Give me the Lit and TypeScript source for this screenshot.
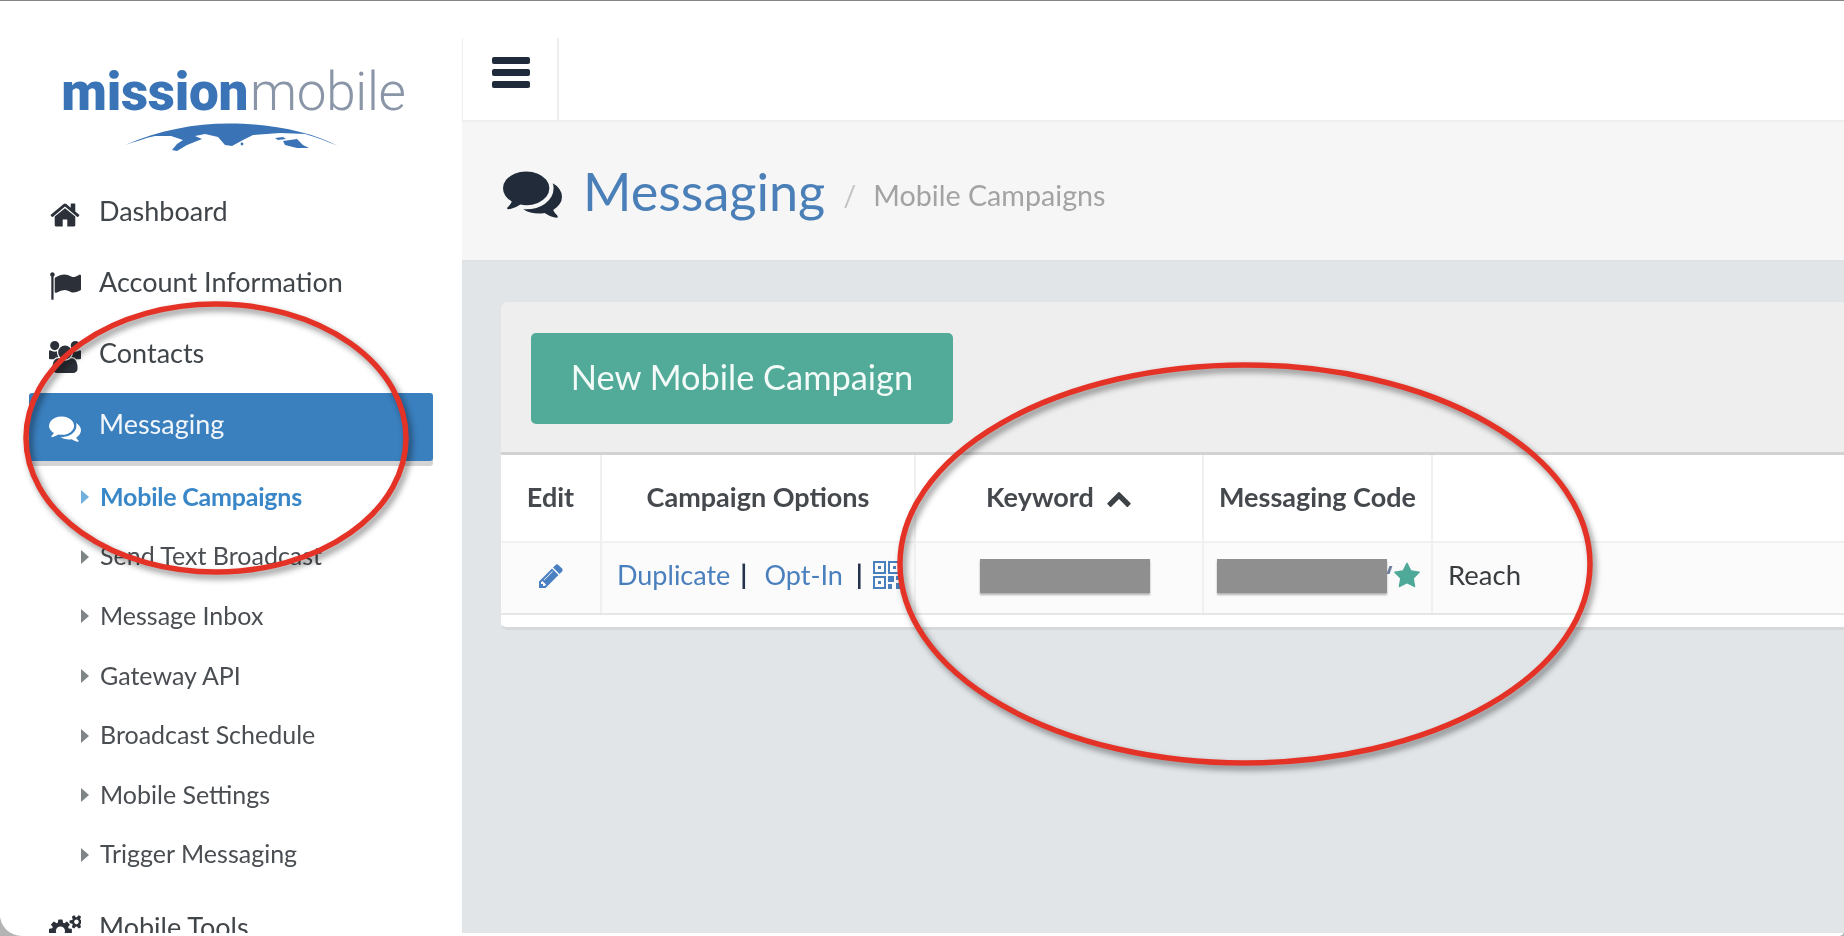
import { LitElement, html, css, svg } from "lit";
import { customElement } from "lit/decorators.js";

const COMMENTS = "M1408 768q0 139-94 257t-256.5 186.5-353.5 68.5q-86 0-176-16-124 88-278 128-36 9-86 16h-3q-11 0-20.5-8t-11.5-21q-1-3-1-6.5t.5-6.5 2-6l2.5-5 3.5-5.5 4-5 4.5-5 4-4.5q5-6 23-25t26-29.5 22.5-29 25-38.5 20.5-44q-124-72-195-177t-71-224q0-139 94-257t256.5-186.5 353.5-68.5 353.5 68.5 256.5 186.5 94 257zm384 256q0 120-71 224.5t-195 176.5q10 24 20.5 44t25 38.5 22.5 29 26 29.5 23 25q1 1 4 4.5t4.5 5 4 5 3.5 5.5l2.5 5 2 6 .5 6.5-1 6.5q-3 14-13 22t-22 7q-50-7-86-16-154-40-278-128-90 16-176 16-271 0-472-132 58 4 88 4 161 0 309-45t264-129q125-92 192-212t67-254q0-77-23-152 129 71 204 178t75 230z";
const HOME = "M1472 992v480q0 26-19 45t-45 19h-384v-384h-256v384h-384q-26 0-45-19t-19-45v-480q0-1 .5-3t.5-3l575-474 575 474q1 2 1 6zm223-69l-62 74q-8 9-21 11h-3q-13 0-21-7l-692-577-692 577q-12 8-24 7-13-2-21-11l-62-74q-8-10-7-23.5t11-21.5l719-599q32-26 76-26t76 26l244 204v-195q0-14 9-23t23-9h192q14 0 23 9t9 23v408l219 182q10 8 11 21.5t-7 23.5z";
const FLAG = "M320 256q0 72-64 110v1266q0 13-9.5 22.5t-22.5 9.5h-64q-13 0-22.5-9.5t-9.5-22.5v-1266q-64-38-64-110 0-53 37.5-90.5t90.5-37.5 90.5 37.5 37.5 90.5zm1472 64v763q0 25-12.5 38.5t-39.5 27.5q-215 116-369 116-61 0-123.5-22t-108.5-48-115.5-48-142.5-22q-192 0-464 146-17 9-33 9-26 0-45-19t-19-45v-742q0-32 31-55 21-14 79-43 236-120 421-120 107 0 200 29t219 88q38 19 88 19 54 0 117.5-21t110-47 88-47 54.5-21q26 0 45 19t19 45z";
const GROUP = "M529 896q-162 5-265 128h-134q-82 0-138-40.5t-56-118.5q0-353 124-353 6 0 43.5 21t97.5 42.5 119 21.5q67 0 133-23-5 37-5 66 0 139 81 256zm1071 637q0 120-73 189.5t-194 69.5h-874q-121 0-194-69.5t-73-189.5q0-53 3.5-103.5t14-109 26.5-108.5 43-97.5 62-81 85.5-53.5 111.5-20q10 0 43 21.5t73 48 107 48 135 21.5 135-21.5 107-48 73-48 43-21.5q61 0 111.5 20t85.5 53.5 62 81 43 97.5 26.5 108.5 14 109 3.5 103.5zm-1024-1277q0 106-75 181t-181 75-181-75-75-181 75-181 181-75 181 75 75 181zm704 384q0 159-112.5 271.5t-271.5 112.5-271.5-112.5-112.5-271.5 112.5-271.5 271.5-112.5 271.5 112.5 112.5 271.5zm576 225q0 78-56 118.5t-138 40.5h-134q-103-123-265-128 81-117 81-256 0-29-5-66 66 23 133 23 59 0 119-21.5t97.5-42.5 43.5-21q124 0 124 353zm-128-609q0 106-75 181t-181 75-181-75-75-181 75-181 181-75 181 75 75 181z";
const COGS = "M896 896q0-106-75-181t-181-75-181 75-75 181 75 181 181 75 181-75 75-181zm768 512q0-52-38-90t-90-38-90 38-38 90q0 53 37.5 90.5t90.5 37.5 90.5-37.5 37.5-90.5zm0-1024q0-52-38-90t-90-38-90 38-38 90q0 53 37.5 90.5t90.5 37.5 90.5-37.5 37.5-90.5zm-384 421v185q0 10-7 19.5t-16 10.5l-155 24q-11 35-32 76 34 48 90 115 7 11 7 20 0 12-7 19-23 30-82.5 89.5t-78.5 59.5q-11 0-21-7l-115-90q-37 19-77 31-11 108-23 155-7 24-30 24h-186q-11 0-20-7.5t-10-17.5l-23-153q-34-10-75-31l-118 89q-7 7-20 7-11 0-21-8-144-133-144-160 0-9 7-19 10-14 41-53t47-61q-23-44-35-82l-152-24q-10-1-17-9.5t-7-19.5v-185q0-10 7-19.5t16-10.5l155-24q11-35 32-76-34-48-90-115-7-11-7-20 0-12 7-20 22-30 82-89t79-59q11 0 21 7l115 90q34-18 77-32 11-108 23-154 7-24 30-24h186q11 0 20 7.5t10 17.5l23 153q34 10 75 31l118-89q8-7 20-7 11 0 21 8 144 133 144 160 0 8-7 19-12 16-42 54t-45 60q23 48 34 82l152 23q10 2 17 10.5t7 19.5zm640 533v140q0 16-149 31-12 27-30 52 51 113 51 138 0 4-4 7-122 71-124 71-8 0-46-47t-52-68q-20 2-30 2t-30-2q-14 21-52 68t-46 47q-2 0-124-71-4-3-4-7 0-25 51-138-18-25-30-52-149-15-149-31v-140q0-16 149-31 13-29 30-52-51-113-51-138 0-4 4-7 4-2 35-20t59-34 30-16q8 0 46 46.5t52 67.5q20-2 30-2t30 2q51-71 92-112l6-2q4 0 124 70 4 3 4 7 0 25-51 138 17 23 30 52 149 15 149 31zm0-1024v140q0 16-149 31-12 27-30 52 51 113 51 138 0 4-4 7-122 71-124 71-8 0-46-47t-52-68q-20 2-30 2t-30-2q-14 21-52 68t-46 47q-2 0-124-71-4-3-4-7 0-25 51-138-18-25-30-52-149-15-149-31v-140q0-16 149-31 13-29 30-52-51-113-51-138 0-4 4-7 4-2 35-20t59-34 30-16q8 0 46 46.5t52 67.5q20-2 30-2t30 2q51-71 92-112l6-2q4 0 124 70 4 3 4 7 0 25-51 138 17 23 30 52 149 15 149 31z";
const PENCIL = "M491 1536l91-91-235-235-91 91v107h128v128h107zm523-928q0-22-22-22-10 0-17 7l-542 542q-7 7-7 17 0 22 22 22 10 0 17-7l542-542q7-7 7-17zm-54-192l416 416-832 832h-416v-416zm683 96q0 53-37 90l-166 166-416-416 166-165q36-38 90-38 53 0 91 38l235 234q37 39 37 91z";
const STAR = "M1728 647q0 22-26 48l-363 354 86 500q1 7 1 20 0 21-10.5 35.5t-30.5 14.5q-19 0-40-12l-449-236-449 236q-22 12-40 12-21 0-31.5-14.5t-10.5-35.5q0-6 2-20l86-500-364-354q-25-27-25-48 0-37 56-46l502-73 225-455q19-41 49-41t49 41l225 455 502 73q56 9 56 46z";
const CHEVRON = "M1683 1331l-166 165q-19 19-45 19t-45-19l-531-531-531 531q-19 19-45 19t-45-19l-166-165q-19-19-19-45.5t19-45.5l742-741q19-19 45-19t45 19l742 741q19 19 19 45.5t-19 45.5z";

const fa = (d: string, cls: string) => html`<svg class=${cls} viewBox="0 0 1792 1792" aria-hidden="true"><path fill="currentColor" d=${d}></path></svg>`;

const SUBS = ["Mobile Campaigns", "Send Text Broadcast", "Message Inbox", "Gateway API", "Broadcast Schedule", "Mobile Settings", "Trigger Messaging"];

@customElement("app-root")
export class AppRoot extends LitElement {
  static styles = css`
    :host { display: block; position: relative; width: 1844px; height: 936px; overflow: hidden; background: #b4b4b4; font-family: "Lato", "Liberation Sans", sans-serif; color: #40454a; }
    * { box-sizing: border-box; }
    .window { height: 936px; border-top: 1px solid #858585; background: #fff; border-radius: 0 0 5px 22px; overflow: hidden; padding-bottom: 3px; filter: blur(0.6px); }
    .shell { display: flex; height: 100%; }

    .sidebar { width: 462px; flex: none; background: #fff; overflow: hidden; padding: 0 29px; }
    .logo { height: 176px; margin-left: 33px; width: 343px; display: flex; flex-direction: column; align-items: center; padding-top: 63px; }
    .word { white-space: nowrap; line-height: 56px; height: 56px; font-family: "Roboto", sans-serif; font-size: 53px; color: #3a74b6; }
    .word b { font-weight: 900; letter-spacing: -0.3px; }
    .word span { font-weight: 300; color: #8a95a8; letter-spacing: -0.3px; margin-left: 2px; }
    .globe { width: 213px; height: 28px; margin: 3px 0 0 -4px; color: #3a74b6; flex: none; }

    .item { display: flex; align-items: center; height: 71px; padding: 0 0 5px 20px; font-size: 27px; color: #40454a; }
    .item .ic { width: 32px; height: 32px; margin: 10px 18px 0 0; flex: none; color: #2c3038; }
    .item.active { margin-top: 3px; height: 68px; padding-bottom: 8px; background: #3a7fbe; color: #f1f6fb; border-radius: 3px; box-shadow: 0 5px 0 #d4d4d4; }
    .item.active .ic { color: #fff; }
    .subs { padding-top: 5px; padding-bottom: 10px; }
    .sub { display: flex; align-items: center; height: 59.6px; padding-left: 52px; font-size: 25px; color: #4a4e52; }
    .sub i { width: 0; height: 0; border-left: 8px solid #7f8486; border-top: 7px solid transparent; border-bottom: 7px solid transparent; margin: 3px 11px 0 0; flex: none; }
    .sub.on { color: #3a87c8; font-weight: 700; letter-spacing: -0.22px; }
    .sub.on i { border-left-color: #6fb0dc; }

    .main { flex: 1; min-width: 0; display: flex; flex-direction: column; background: #e1e5e8; }
    .topbar { height: 121px; flex: none; background: #fff; border-bottom: 2px solid #efefef; padding-top: 37px; }
    .toggle { width: 97px; height: 83px; border-left: 1px solid #eee; border-right: 2px solid #eee; padding: 19px 0 0 29px; display: flex; flex-direction: column; gap: 5px; }
    .toggle i { display: block; width: 38px; height: 7px; border-radius: 2px; background: #1f2a3a; }

    .pagehead { height: 140px; flex: none; background: #f6f6f6; border-bottom: 2px solid #dfe2e4; display: flex; align-items: center; padding: 0 0 0 41px; }
    .pagehead .big { width: 59px; height: 59px; color: #212b3a; margin-right: 21px; margin-top: 2px; flex: none; }
    .pagehead h1 { margin: 0; font-size: 52.2px; font-weight: 400; color: #4a7fb8; line-height: 1; }
    .pagehead .sep { margin: 8px 0 0 18px; font-size: 28.7px; color: #c4c4c4; }
    .pagehead .crumb { margin: 8px 0 0 17px; font-size: 28.7px; color: #a3a3a3; }

    .content { flex: 1; padding: 40px 0 0 39px; }
    .card { background: #fff; border-radius: 8px 0 0 6px; border-bottom: 3px solid #d8d8d8; padding-bottom: 12px; overflow: hidden; }
    .tools { background: #eee; height: 153px; padding: 31px 0 0 30px; border-bottom: 3px solid #d2d2d2; }
    .btn { display: flex; align-items: center; justify-content: center; width: 422px; height: 91px; padding-bottom: 5px; background: #52aa98; border-radius: 5px; color: #f2fbf8; font-size: 34.4px; }
    table { width: 100%; border-collapse: collapse; table-layout: fixed; }
    col.c1 { width: 100px; } col.c2 { width: 314px; } col.c3 { width: 288px; } col.c4 { width: 229px; }
    th { height: 87px; font-size: 27px; font-weight: 700; color: #45494e; text-align: center; border-right: 2px solid #f0f0f0; padding: 0 0 4px; }
    th:last-child, td:last-child { border-right: 0; }
    th .chev { width: 26px; height: 26px; margin-left: 12px; vertical-align: -4px; color: #3d4247; }
    td { height: 72px; font-size: 27.5px; color: #3a3d40; background: #fbfbfb; border-top: 2px solid #f1f1f1; border-bottom: 2px solid #e6e6e6; border-right: 2px solid #f0f0f0; padding: 0 0 4px; }
    td.center { text-align: center; padding-bottom: 10px; }
    td.reach { padding: 0 0 7px 15px; }
    .pen { width: 28px; height: 28px; color: #4a7fc1; vertical-align: middle; }
    .opts { display: flex; align-items: center; padding-left: 15px; margin-top: -3px; font-size: 27px; white-space: nowrap; overflow: hidden; color: #4a7fbe; }
    .opts .bar { color: #26324d; font-weight: 700; margin: 0 17px 0 10px; }
    .opts .bar.b2 { margin: 0 10px 0 13px; }
    .qr { width: 28px; height: 28px; flex: none; color: #4a7fbe; }
    .redact { display: block; width: 170px; height: 34px; flex: none; background: #8f8f8f; box-shadow: 0 2px 2px rgba(0,0,0,.3); }
    .cell-k { padding-left: 64px; }
    .cell-m { display: flex; align-items: center; padding-left: 13px; }
    .tick { width: 3px; height: 8px; margin: 0 2px 12px 1px; flex: none; background: #6d7f9c; transform: skewX(-20deg); }
    .star { width: 28px; height: 28px; color: #4fa998; flex: none; }

    .marks { position: absolute; inset: 0; width: 1844px; height: 936px; pointer-events: none; }
    .marks ellipse { fill: none; stroke: #e43326; stroke-width: 5.5; filter: drop-shadow(3px 4px 3px rgba(0,0,0,.45)); }
  `;

  private globe() {
    return html`<svg class="globe" viewBox="0 0 213 28" aria-hidden="true">${svg`<path fill="currentColor" d="M0 22C35 7 70 .5 103 .5c45 0 84 9 110 22.5-12-5-22-9-33-12l-25-1-27 2-10 5-11 6-7-1-7-8-13-3-10 2 7 3-15 6-10 6-5-1 5-6 6-4-12-4-16 0C20 15 10 19 0 22Z"/><path fill="currentColor" d="M158 18l14-2 6 6 6 3-12 0-12-3Z"/><path fill="currentColor" d="M150 15l8-1 3 2-8 1Z"/><circle fill="currentColor" cx="117" cy="21" r="1.4"/>`}</svg>`;
  }

  render() {
    return html`
      <div class="window">
        <div class="shell">
          <nav class="sidebar">
            <div class="logo">
              <div class="word"><b>mission</b><span>mobile</span></div>
              ${this.globe()}
            </div>
            <div class="item">${fa(HOME, "ic")}Dashboard</div>
            <div class="item">${fa(FLAG, "ic")}Account Information</div>
            <div class="item">${fa(GROUP, "ic")}Contacts</div>
            <div class="item active">${fa(COMMENTS, "ic")}Messaging</div>
            <div class="subs">
              ${SUBS.map((s, i) => html`<div class="sub ${i === 0 ? "on" : ""}"><i></i>${s}</div>`)}
            </div>
            <div class="item">${fa(COGS, "ic")}Mobile Tools</div>
          </nav>
          <div class="main">
            <div class="topbar"><div class="toggle"><i></i><i></i><i></i></div></div>
            <div class="pagehead">
              ${fa(COMMENTS, "big")}
              <h1>Messaging</h1>
              <span class="sep">/</span>
              <span class="crumb">Mobile Campaigns</span>
            </div>
            <div class="content">
              <div class="card">
                <div class="tools"><div class="btn">New Mobile Campaign</div></div>
                <table>
                  <colgroup><col class="c1" /><col class="c2" /><col class="c3" /><col class="c4" /><col /></colgroup>
                  <thead>
                    <tr>
                      <th>Edit</th>
                      <th>Campaign Options</th>
                      <th>Keyword${fa(CHEVRON, "chev")}</th>
                      <th>Messaging Code</th>
                      <th></th>
                    </tr>
                  </thead>
                  <tbody>
                    <tr>
                      <td class="center">${fa(PENCIL, "pen")}</td>
                      <td>
                        <div class="opts">
                          <span>Duplicate</span><span class="bar">|</span><span>Opt-In</span><span class="bar b2">|</span>
                          <svg class="qr" viewBox="0 0 28 28" aria-hidden="true">${svg`<g fill="none" stroke="currentColor" stroke-width="2"><rect x="1" y="1" width="11" height="11"/><rect x="16" y="1" width="11" height="11"/><rect x="1" y="16" width="11" height="11"/></g><g fill="currentColor"><rect x="5" y="5" width="3" height="3"/><rect x="20" y="5" width="3" height="3"/><rect x="5" y="20" width="3" height="3"/><rect x="15" y="15" width="6" height="6"/><rect x="23" y="15" width="5" height="4"/><rect x="15" y="23" width="4" height="5"/><rect x="23" y="22" width="5" height="6"/></g>`}</svg>
                        </div>
                      </td>
                      <td><div class="cell-k"><span class="redact"></span></div></td>
                      <td><div class="cell-m"><span class="redact"></span><span class="tick"></span>${fa(STAR, "star")}</div></td>
                      <td class="reach">Reach</td>
                    </tr>
                  </tbody>
                </table>
              </div>
            </div>
          </div>
        </div>
      </div>
      <svg class="marks" viewBox="0 0 1844 936" aria-hidden="true">
        ${svg`<ellipse cx="216" cy="438" rx="190" ry="134"/><ellipse cx="1245" cy="564" rx="345" ry="199"/>`}
      </svg>
    `;
  }
}
